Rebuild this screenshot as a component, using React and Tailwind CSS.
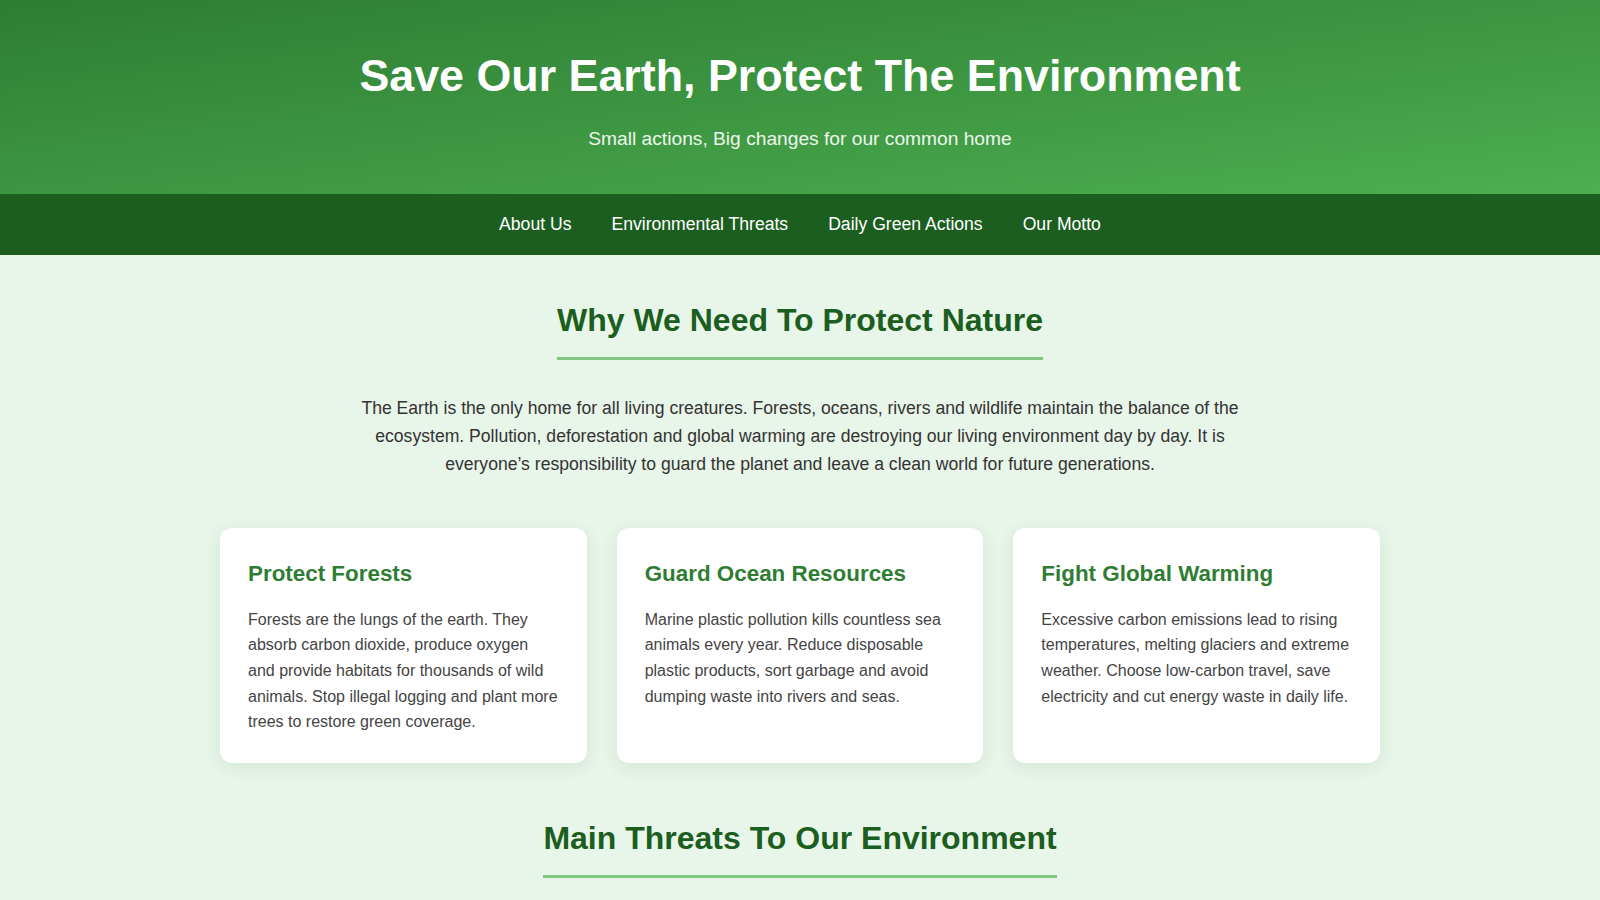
const navLinks = ['About Us', 'Environmental Threats', 'Daily Green Actions', 'Our Motto']

const reasons = [
  {
    title: 'Protect Forests',
    text: 'Forests are the lungs of the earth. They absorb carbon dioxide, produce oxygen and provide habitats for thousands of wild animals. Stop illegal logging and plant more trees to restore green coverage.'
  },
  {
    title: 'Guard Ocean Resources',
    text: 'Marine plastic pollution kills countless sea animals every year. Reduce disposable plastic products, sort garbage and avoid dumping waste into rivers and seas.'
  },
  {
    title: 'Fight Global Warming',
    text: 'Excessive carbon emissions lead to rising temperatures, melting glaciers and extreme weather. Choose low-carbon travel, save electricity and cut energy waste in daily life.'
  }
]

const threats = [
  { title: 'Air Pollution', text: 'Factory smoke and vehicle exhaust fill the air with harmful particles that damage our lungs.' },
  { title: 'Water Pollution', text: 'Chemical waste and sewage poison rivers, lakes and the drinking water we depend on.' },
  { title: 'Loss Of Wildlife', text: 'Habitat destruction pushes thousands of species closer to extinction every year.' }
]

function SectionTitle({ children }) {
  return (
    <div className="text-center">
      <h2 className="inline-block text-[32px] font-bold leading-[1.15] text-[#1b5e20] pb-[18px] border-b-[3px] border-[#81c784]">
        {children}
      </h2>
    </div>
  )
}

function Card({ title, text }) {
  return (
    <div className="bg-white rounded-xl px-[28px] pt-[30px] pb-[28px] shadow-[0_4px_16px_rgba(46,125,50,0.12)]">
      <h3 className="text-[22.4px] font-bold leading-[1.4] text-[#2e7d32] mb-[17px]">{title}</h3>
      <p className="text-base leading-[1.6] text-[#444]">{text}</p>
    </div>
  )
}

export default function App() {
  return (
    <div className="min-h-screen bg-[#e8f5e9] font-['Liberation_Sans',Arial,sans-serif]">
      <header className="bg-gradient-to-br from-[#2e7d32] to-[#4caf50] text-white text-center pt-[50px] pb-[40px] px-5">
        <h1 className="text-[44.8px] font-bold leading-[1.15]">Save Our Earth, Protect The Environment</h1>
        <p className="mt-[22px] text-[19.2px] leading-[1.6] text-white/90">Small actions, Big changes for our common home</p>
      </header>

      <nav className="bg-[#1b5e20] py-[18px]">
        <ul className="flex justify-center gap-10">
          {navLinks.map(link => (
            <li key={link}>
              <a href="#" className="text-white text-[17.6px] leading-[1.4]">{link}</a>
            </li>
          ))}
        </ul>
      </nav>

      <main className="max-w-[1200px] mx-auto px-5">
        <section className="pt-[47px]">
          <SectionTitle>Why We Need To Protect Nature</SectionTitle>
          <p className="max-w-[900px] mx-auto mt-[34px] text-center text-[17.6px] leading-[1.6] text-[#333]">
            The Earth is the only home for all living creatures. Forests, oceans, rivers and wildlife maintain the balance of the ecosystem. Pollution, deforestation and global warming are destroying our living environment day by day. It is everyone’s responsibility to guard the planet and leave a clean world for future generations.
          </p>
          <div className="grid grid-cols-3 gap-[30px] mt-[50px]">
            {reasons.map(r => (
              <Card key={r.title} title={r.title} text={r.text} />
            ))}
          </div>
        </section>

        <section className="pt-[57px] pb-[60px]">
          <SectionTitle>Main Threats To Our Environment</SectionTitle>
          <div className="grid grid-cols-3 gap-[30px] mt-[50px]">
            {threats.map(t => (
              <Card key={t.title} title={t.title} text={t.text} />
            ))}
          </div>
        </section>
      </main>
    </div>
  )
}
